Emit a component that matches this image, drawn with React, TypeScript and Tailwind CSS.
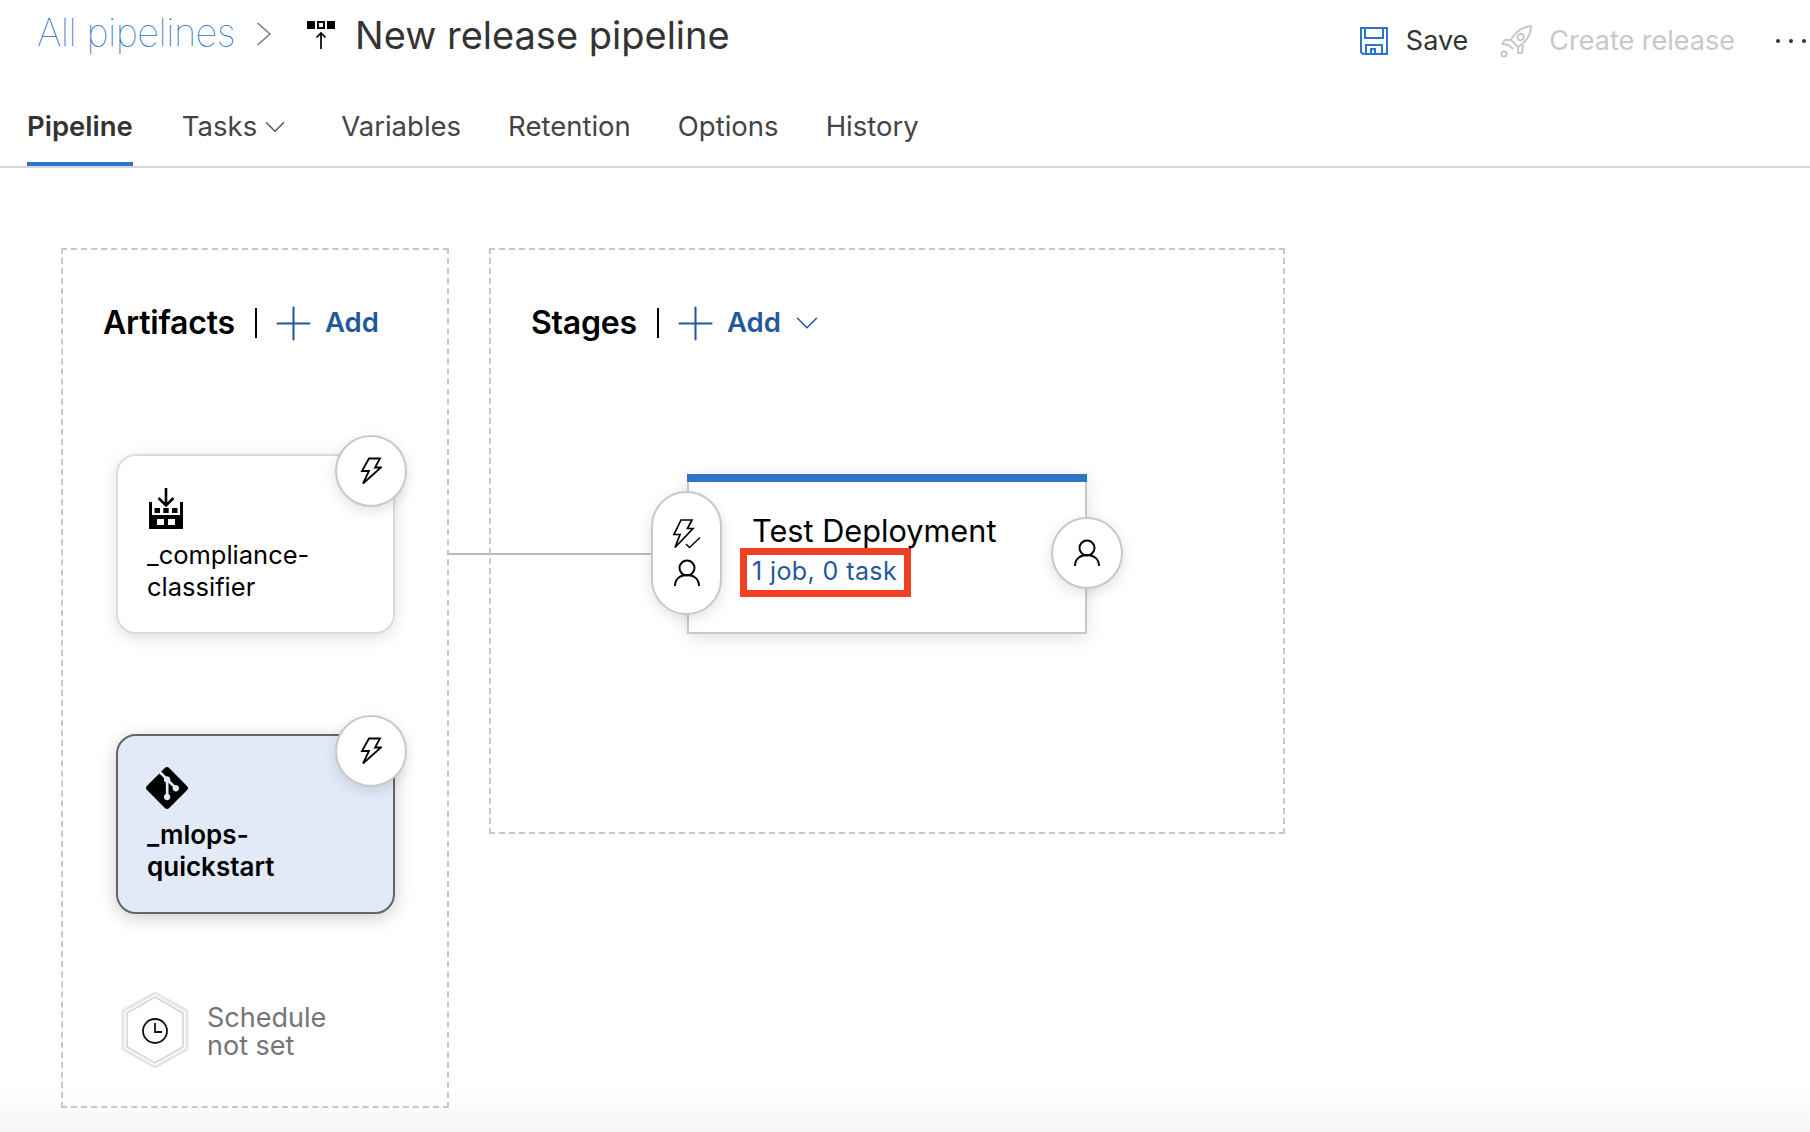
import React from 'react';
import { ChevronDown, Plus } from 'lucide-react';
import { SiGit } from 'react-icons/si';

const font = { fontFamily: 'Inter, "Liberation Sans", sans-serif' };

const BoltIcon = () => (
  <svg width="22" height="28" viewBox="0 0 22 28" fill="none" stroke="#000" strokeWidth="1.8" strokeLinejoin="miter">
    <path d="M9 1.500 H20 L15 10.500 H21 L3 26.500 L9 14 H2 Z" />
  </svg>
);

const BoltCheckIcon = () => (
  <svg width="29" height="30" viewBox="0 0 29 30" fill="none" stroke="#000" strokeWidth="1.7">
    <path d="M9 1 H20 L15.500 9.500 H21 L3 28.500 L8 15.500 H2 Z" />
    <path d="M14 25 L17.500 28.500 L28 18.500" strokeWidth="1.4" />
  </svg>
);

const UserIcon = () => (
  <svg width="26" height="28" viewBox="0 0 26 28" fill="none" stroke="#000" strokeWidth="2">
    <circle cx="13" cy="9" r="7.500" />
    <path d="M1 27 C1 20 6 16 13 16 C20 16 25 20 25 27" />
  </svg>
);

const FloppyIcon = () => (
  <svg width="28" height="28" viewBox="0 0 28 28" fill="none" stroke="#2f74c8" strokeWidth="2">
    <path d="M1 1 H27 V27 H3 L1 25 Z" />
    <path d="M5 1 V11 H23 V1" />
    <path d="M6 27 V18 H22 V27" />
    <path d="M11 27 V22 H15 V27" />
  </svg>
);

const RocketIcon = () => (
  <svg width="33" height="33" viewBox="0 0 33 33" fill="none" stroke="#c8c8c8" strokeWidth="2" strokeLinejoin="round">
    <path d="M11 15 C15 7 22 2 31 1 C31 10 26 17 18 22 Z" />
    <circle cx="20.500" cy="12" r="3.200" />
    <path d="M11 15 L5 15 L2 19 L9 20" />
    <path d="M18 22 L18 28 L22 28 L23 20" />
    <path d="M9 20 L13 24" />
    <circle cx="4" cy="29" r="2.600" />
  </svg>
);

const PipelineIcon = () => (
  <svg width="28" height="29" viewBox="0 0 28 29" fill="none">
    <rect x="0" y="0" width="8" height="8" fill="#000" />
    <rect x="11" y="1" width="6" height="6" fill="#fff" stroke="#000" strokeWidth="2" />
    <rect x="20" y="0" width="8" height="8" fill="#000" />
    <path d="M14 28 V12 M9.500 16.500 L14 12 L18.500 16.500" stroke="#000" strokeWidth="1.700" />
  </svg>
);

const FactoryIcon = () => (
  <svg width="34" height="41" viewBox="0 0 34 41" className="ml-[2px]">
    <path d="M17 0 V17 M9.500 10 L17 17.500 L24.500 10" fill="none" stroke="#000" strokeWidth="2.600" />
    <path
      fillRule="evenodd"
      fill="#000"
      d="M0 14 H3 V27 H31 V14 H34 V41 H0 Z M8 31 V37 H15 V31 Z M19 31 V37 H26 V31 Z"
    />
    <path fill="#000" d="M5.500 20 H11 V25 H5.500 Z M14.300 20 H19.700 V25 H14.300 Z M23 20 H28.500 V25 H23 Z" />
  </svg>
);

const ScheduleBadge = () => (
  <svg width="70" height="78" viewBox="0 0 70 78" fill="none" className="shrink-0">
    <path d="M35 2 L67 20 V58 L35 76 L3 58 V20 Z" fill="#fff" stroke="#e6e6e6" strokeWidth="3" />
    <path d="M35 6 L63 22 V56 L35 72 L7 56 V22 Z" stroke="#d2d2d2" strokeWidth="1.500" />
    <circle cx="35" cy="40" r="12" stroke="#111" strokeWidth="1.800" />
    <path d="M35 32 V41 H42" stroke="#111" strokeWidth="1.800" />
  </svg>
);

const IconCircle = ({ children, className }: { children: React.ReactNode; className: string }) => (
  <div className={`absolute flex items-center justify-center bg-white border-2 border-[#c8c8c8] shadow-[0_4px_14px_rgba(0,0,0,0.12)] ${className}`}>
    {children}
  </div>
);

const SectionHeader = ({ title, dropdown }: { title: string; dropdown?: boolean }) => (
  <div className="flex items-center h-[32px]">
    <span className="text-[32px] font-semibold text-black tracking-[-0.2px]">{title}</span>
    <span className="w-[2px] h-[30px] bg-black ml-[20px]" />
    <Plus size={55} strokeWidth={0.9} className="text-[#22599c] ml-[9px]" />
    <span className="text-[27.500px] font-semibold text-[#22599c] ml-[4px]">Add</span>
    {dropdown && <ChevronDown size={38} strokeWidth={1} className="text-[#22599c] ml-[7px]" />}
  </div>
);

const ArtifactCard = ({ name, icon, selected }: { name: string[]; icon: React.ReactNode; selected?: boolean }) => (
  <div
    className={`relative w-[279px] h-[180px] rounded-[20px] border-2 pl-[29px] pt-[31px] ${
      selected
        ? 'bg-[#e1eaf6] border-[#5f6670] shadow-[0_4px_18px_rgba(0,0,0,0.2)] font-semibold'
        : 'bg-white border-[#dcdcdc] shadow-[0_4px_16px_rgba(0,0,0,0.12)]'
    }`}
  >
    <div className="h-[42px] flex items-center">{icon}</div>
    <div className={`mt-[10px] leading-[32px] text-black ${selected ? 'text-[26px]' : 'text-[25.500px]'}`}>
      {name.map(line => (
        <div key={line}>{line}</div>
      ))}
    </div>
    <IconCircle className="w-[72px] h-[72px] rounded-full -right-[14px] -top-[21px]">
      <BoltIcon />
    </IconCircle>
  </div>
);

export default function App() {
  const tabs = ['Variables', 'Retention', 'Options', 'History'];

  return (
    <div style={font} className="w-[1810px] h-[1132px] overflow-hidden flex flex-col bg-gradient-to-b from-white from-[96%] to-[#f6f6f6]">
      <div className="h-[166px] border-b-2 border-[#d8d8d8] box-content bg-white">
        <div className="flex h-[80px]">
          <div className="flex items-center h-[68px] pl-[37px]">
            <span className="text-[38px] font-thin text-[#1f68c4] tracking-[-0.5px] -mt-[4px]">All pipelines</span>
            <svg width="16" height="24" viewBox="0 0 16 24" fill="none" stroke="#777" strokeWidth="1.500" className="ml-[21px]">
              <path d="M1.500 1 L14 12 L1.500 23" />
            </svg>
            <span className="ml-[35px] mt-[3px]"><PipelineIcon /></span>
            <span className="ml-[20px] mt-[2px] text-[38px] text-[#333]">New release pipeline</span>
          </div>
          <div className="ml-auto flex items-center h-[80px] pt-[2px] pr-[7px]">
            <FloppyIcon />
            <span className="ml-[18px] text-[27px] text-[#333]">Save</span>
            <span className="ml-[32px]"><RocketIcon /></span>
            <span className="ml-[16px] text-[27px] text-[#c8c8c8]">Create release</span>
            <span className="ml-[41px] flex gap-[9px] -mr-[3px]">
              <span className="w-[4px] h-[4px] rounded-full bg-[#333]" />
              <span className="w-[4px] h-[4px] rounded-full bg-[#333]" />
              <span className="w-[4px] h-[4px] rounded-full bg-[#333]" />
            </span>
          </div>
        </div>
        <div className="flex h-[86px] pl-[27px] text-[27.500px] text-[#444]">
          <div className="h-[86px] flex items-center font-semibold text-[#333] border-b-[4px] border-[#2f74c8] pt-[12px]">Pipeline</div>
          <div className="ml-[49px] flex items-center pt-[8px] h-[86px]">
            Tasks
            <ChevronDown size={34} strokeWidth={1} className="ml-[1px] text-[#555]" />
          </div>
          {tabs.map((tab, i) => (
            <div key={tab} className={`flex items-center pt-[8px] h-[86px] ${i === 0 ? 'ml-[49px]' : 'ml-[47px]'}`}>{tab}</div>
          ))}
        </div>
      </div>

      <div className="flex-1 flex items-start pl-[61px] pt-[80px]">
        <div className="relative w-[388px] h-[860px] border-2 border-dashed border-[#c8c8c8] pl-[40px] pt-[57px]">
          <SectionHeader title="Artifacts" />
          <div className="ml-[13px] mt-[115px]">
            <ArtifactCard name={['_compliance-', 'classifier']} icon={<FactoryIcon />} />
          </div>
          <div className="ml-[13px] mt-[100px]">
            <ArtifactCard selected name={['_mlops-', 'quickstart']} icon={<SiGit size={42} color="#000" className="-ml-[1px]" />} />
          </div>
          <div className="ml-[17px] mt-[77px] flex items-center text-[27px] leading-[28px] text-[#757575]">
            <ScheduleBadge />
            <div className="ml-[17px] mt-[4px]">Schedule<br />not set</div>
          </div>
          <div className="absolute left-[386px] top-[303px] w-[204px] h-[2px] bg-[#b8b8b8]" />
        </div>

        <div className="relative ml-[40px] w-[796px] h-[586px] border-2 border-dashed border-[#c8c8c8] pl-[40px] pt-[57px]">
          <SectionHeader title="Stages" dropdown />
          <div className="absolute left-[196px] top-[224px] w-[400px] h-[160px] bg-white border-2 border-t-0 border-[#c8c8c8] shadow-[0_4px_16px_rgba(0,0,0,0.12)]">
            <div className="h-[8px] -mx-[2px] bg-[#2f74c8]" />
            <div className="pl-[63px] pt-[29px]">
              <div className="text-[30.700px] leading-[40px] text-black">Test Deployment</div>
              <div className="-ml-[12px] mt-[-3px] w-[171px] h-[49px] border-[7px] border-[#ee4023] pl-[5px] text-[25px] leading-[33px] text-[#22599c] tracking-[0.4px]">1 job, 0 task</div>
            </div>
            <IconCircle className="w-[71px] h-[124px] rounded-full -left-[38px] top-[17px] flex-col gap-[10px] pb-[1px]">
              <BoltCheckIcon />
              <UserIcon />
            </IconCircle>
            <IconCircle className="w-[72px] h-[72px] rounded-full -right-[38px] top-[43px]">
              <UserIcon />
            </IconCircle>
          </div>
        </div>
      </div>
    </div>
  );
}
